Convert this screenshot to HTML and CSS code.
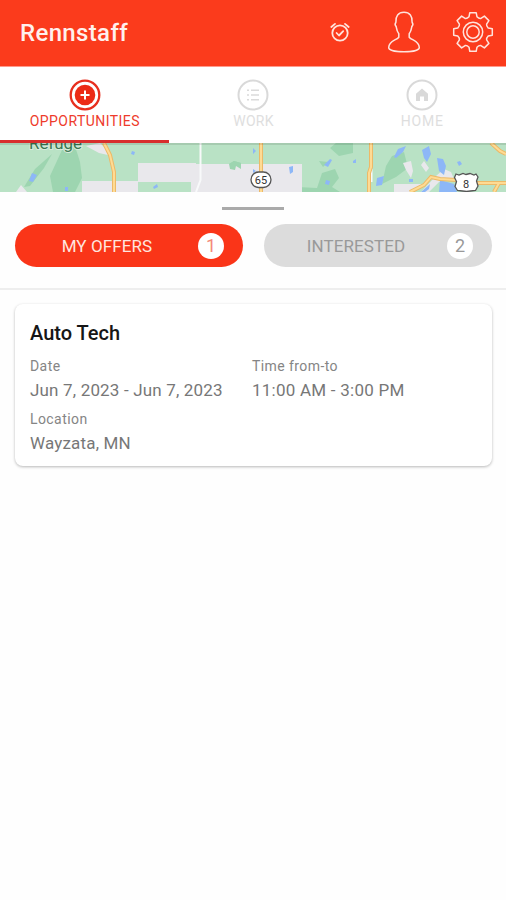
FILE: index.html
```html
<!DOCTYPE html>
<html lang="en">
<head>
<meta charset="utf-8">
<title>Rennstaff</title>
<link rel="stylesheet" href="styles.css">
</head>
<body>
<header class="topbar">
  <h1 class="brand">Rennstaff</h1>
  <svg class="icon-alarm" width="20" height="20" viewBox="0 0 20 20">
    <circle cx="10" cy="11" r="7.7"/>
    <path d="M1.3 5 5 1.9M18.7 5 15 1.9M6.600 11l2.400 2.500 4.200-4.300"/>
  </svg>
  <svg class="icon-person" width="34" height="42" viewBox="0 0 34 42">
    <path d="M11.800 26.200V22.800C9.600 20.200 9.600 17.700 9.200 15.600 8 14.400 8 12.400 8.900 11.200 8.500 5 11.200 1.300 17 1.300S25.500 5 25.100 11.200C26 12.400 26 14.400 24.800 15.600 24.400 17.700 24.400 20.200 22.200 22.800V26.200C25 29.600 32 29.500 32.300 36.500 32.300 42.300 1.700 42.300 1.700 36.500 2 29.500 9 29.600 11.800 26.200Z"/>
  </svg>
  <svg class="icon-gear" width="42" height="42" viewBox="-21 -21 42 42">
    <path d="M-4-15.200L-3.200-19.300H3.200L4-15.200Q6-13.200 7.900-13.600L11.400-15.900 15.900-11.400 13.600-7.900Q13.200-6 15.200-4L19.300-3.200V3.200L15.200 4Q13.200 6 13.600 7.900L15.900 11.400 11.400 15.900 7.900 13.600Q6 13.200 4 15.200L3.200 19.300H-3.200L-4 15.200Q-6 13.200-7.900 13.600L-11.400 15.900-15.900 11.400-13.600 7.900Q-13.200 6-15.200 4L-19.300 3.200V-3.200L-15.200-4Q-13.200-6-13.600-7.900L-15.900-11.400-11.400-15.900-7.900-13.600Q-6-13.200-4-15.200Z"/>
    <circle r="9.700"/>
    <circle r="6.200"/>
  </svg>
</header>

<nav class="tabs">
  <a class="tab tab-active">
    <svg width="32" height="32" viewBox="0 0 32 32">
      <circle class="ring" cx="16" cy="16" r="14.300"/>
      <circle class="solid" cx="16" cy="16" r="10.300"/>
      <path class="plus" d="M11.500 16h9M16 11.500v9"/>
    </svg>
    <span class="tab-opportunities">OPPORTUNITIES</span>
  </a>
  <a class="tab">
    <svg width="32" height="32" viewBox="0 0 32 32">
      <circle class="ring" cx="16" cy="16" r="14.500"/>
      <path class="list" d="M10 11.300h2M10 16h2M10 20.700h2M14 11.300h8M14 16h8M14 20.700h8"/>
    </svg>
    <span>WORK</span>
  </a>
  <a class="tab">
    <svg width="32" height="32" viewBox="0 0 32 32">
      <circle class="ring" cx="16" cy="16" r="14.500"/>
      <path class="solid" d="M10 14.800 16 9.500l6 5.300V22h-4v-4.500h-4V22h-4z"/>
    </svg>
    <span class="tab-home">HOME</span>
  </a>
</nav>

<svg class="map" width="506" height="49" viewBox="0 143 506 49">
  <rect class="park" y="143" width="506" height="49"/>
  <g class="woods">
    <path d="M62 150 74 143 80 162 82 178 75 192H53L50 176Z"/>
    <path d="M52 154 44 168 30 186 24 187 35 169Z"/>
    <path d="M336 143h17v10l-14 3-9-8zM322 173l13-4 4 9-7 9 8 5h-43v-5l20 1zM392 156l12-4 4 16-12 9-14 7 4-18zM229 164l5-3 7 2v6l-5-3-1 4-5-1zM319 161l9 1-5 5z"/>
  </g>
  <g class="town">
    <path d="M138 163H196V192H191V182H138ZM82 181h56v11H82zM86 146l14-3 8 8v4l-9-2zM196 164h106v28H196zM16 192l5-7 6 7zM403 163l8-2 2 10-2 7-5-8zM424 161l5 7-3 4-5-7zM394 184h31l-14 8h-17zM436 176l8-7 7 3 3 7-15 3-10 10h-8z"/>
  </g>
  <path class="woods" d="M229 164l5-3 7 2v6l-5-3-1 4-5-1z"/>
  <g class="roads-minor"><path d="M200.500 143V180L196 192M371.500 169V182"/></g>
  <g class="lakes">
    <path d="M29 181l3-8 5 2-4 7zM153 187l4-3 1 3-4 2zM132 151l3 1-1 3-3-1zM65 187h3v4h-3zM289 167l4-1v6l-3 2zM253 148l3 3-3 3zM324 165l6-6 2 1-4 7zM326 180l4 1-1 4-4-1zM353 161l3-2v4h-3zM377 178l7-2-2 9-6 1zM394 157l4-8 8-3-3 6-7 6zM422 150l7-4 2 8-4 8-3-4zM437 158l6 1 3 7-2 9-5-4zM457 162l3-1 2 3-3 2zM440 180l14 4 3 8h-18zM421 192l9-8-1 5-4 3zM409 179h4v3h-4zM253 169l3 2-3 2z"/>
  </g>
  <g class="roads-edge"><path d="M104 143 110 155 114 172V192M261 143V192M371 143V167L369 173V192M410 192 424 185 431 177 440 179 456 180M476 183H506M491 143 500 151 506 154M499 183l-5 9"/></g>
  <g class="roads"><path d="M104 143 110 155 114 172V192M261 143V192M371 143V167L369 173V192M410 192 424 185 431 177 440 179 456 180M476 183H506M491 143 500 151 506 154M499 183l-5 9"/></g>
  <rect class="shield" x="251" y="172" width="20" height="15.500" rx="7.700"/>
  <path class="shield" d="M456 174l3 1 4-1.500 3 1 4-1 4 1.500 2-1 2 3-1.500 4 1.500 5-2.500 4.500-5 .5-4 .500-4-.500-5-.5-2.500-4 1.500-5-2-4z"/>
  <text class="shield-text" x="261" y="184">65</text>
  <text class="shield-text" x="466" y="188">8</text>
  <text class="map-label" x="29" y="148.500" textLength="53" lengthAdjust="spacingAndGlyphs">Refuge</text>
  <rect class="map-shade" y="143" width="506" height="2"/>
</svg>

<section class="offers">
  <div class="handle"></div>
  <div class="filters">
    <button class="pill pill-on"><span class="pill-label">MY OFFERS</span><span class="count">1</span></button>
    <button class="pill"><span class="pill-label pill-interested">INTERESTED</span><span class="count">2</span></button>
  </div>
</section>

<main class="list-area">
  <article class="card">
    <h2>Auto Tech</h2>
    <dl class="details">
      <div><dt>Date</dt><dd>Jun 7, 2023 - Jun 7, 2023</dd></div>
      <div><dt>Time from-to</dt><dd class="times">11:00 AM - 3:00 PM</dd></div>
      <div><dt>Location</dt><dd>Wayzata, MN</dd></div>
    </dl>
  </article>
</main>
</body>
</html>
```
FILE: styles.css
```css
* { box-sizing: border-box; }
body {
  margin: 0;
  min-height: 900px;
  background: #fefefe;
  font-family: Roboto, sans-serif;
  color: #777;
}
h1, h2, dl, dd { margin: 0; }

.topbar {
  height: 67px;
  padding: 0 12.5px 2px 20px;
  display: flex;
  align-items: center;
  background: #fb3b1c;
  border-bottom: 1px solid #ff9a8c;
}
.topbar svg { fill: none; stroke: #ffe3dc; stroke-linejoin: round; stroke-linecap: round; }
.brand { flex: 1; font-size: 24px; font-weight: 500; line-height: 32px; letter-spacing: .35px; color: #fff0ed; padding-top: 2px; }
.topbar .icon-alarm { stroke-width: 1.8; margin-right: 37px; }
.topbar .icon-person { stroke-width: 1.5; margin-right: 31px; }
.topbar .icon-gear { stroke-width: 1.5; }

.tabs { height: 76px; display: grid; grid-template-columns: repeat(3, 1fr); background: #fff; }
.tab {
  display: flex;
  flex-direction: column;
  align-items: center;
  padding: 12px 0 0 1px;
  color: #dedede;
  font-size: 14px;
  line-height: 20px;
  letter-spacing: .3px;
}
.tab .tab-opportunities { letter-spacing: .45px; }
.tab .tab-home { letter-spacing: .8px; }
.tab-active { color: #ee3b2b; border-bottom: 3px solid #d82e2d; }
.ring { fill: none; stroke: #d9d9d9; stroke-width: 2; }
.solid { fill: #d9d9d9; }
.list { fill: none; stroke: #dadada; stroke-width: 1.5; }
.tab-active .ring { stroke: #e72f1e; stroke-width: 2.3; }
.tab-active .solid { fill: #ec2a15; }
.plus { stroke: #fff; stroke-width: 2; }

.map { display: block; }
.park { fill: #b9e2c5; }
.woods { fill: #9dd5b0; }
.town { fill: #e9e8ec; }
.lakes { fill: #8db7f7; }
.roads-minor { fill: none; stroke: #f8f9fa; stroke-width: 2; }
.roads-edge { fill: none; stroke: #edb967; stroke-width: 4; }
.roads { fill: none; stroke: #fedb94; stroke-width: 2; }
.shield { fill: #fff; stroke: #555; stroke-width: 1.3; }
.shield-text { font-size: 11px; fill: #333; text-anchor: middle; }
.map-label { font-size: 16px; fill: #397651; stroke: #d7eadb; stroke-width: 2; paint-order: stroke; }
.map-shade { fill: #000; opacity: .1; }

.offers { height: 98px; padding-top: 15px; border-bottom: 2px solid #eee; background: #fefefe; }
.handle { width: 62px; height: 3px; margin: 0 auto; background: #aaa; }
.filters { display: grid; grid-template-columns: 228px 228px; gap: 21px; padding: 14px 14px 0 15px; }
.pill {
  height: 43px;
  border: 0;
  border-radius: 22px;
  padding: 0 19px 0 27px;
  display: flex;
  align-items: center;
  background: #dcdcdc;
  color: #999;
  font: 400 17px/24px Roboto, sans-serif;
}
.pill-label { flex: 1; text-align: center; padding-right: 26px; letter-spacing: .1px; }
.pill-interested { padding-right: 26px; }
.count { width: 26px; height: 26px; border-radius: 50%; background: #fff; text-align: center; line-height: 26px; font-size: 18px; }
.pill-on { background: #fa3518; color: #ffe5df; }
.pill-on .count { color: #f58a79; }

.list-area { padding: 14px 14px 0 15px; }
.card {
  height: 162px;
  padding: 15px;
  border-radius: 8px;
  background: #fff;
  box-shadow: 0 1px 3px rgba(0, 0, 0, .28);
}
.card h2 { font-size: 20px; font-weight: 500; line-height: 28px; color: #161616; }
.details { display: grid; grid-template-columns: 222px 1fr; padding-top: 9px; }
.details > div { height: 53px; }
dt { font-size: 14px; line-height: 20px; letter-spacing: .42px; color: #858585; }
dd { font-size: 17px; line-height: 24px; letter-spacing: .17px; padding-top: 2px; white-space: nowrap; }
.times { letter-spacing: .24px; }
```
